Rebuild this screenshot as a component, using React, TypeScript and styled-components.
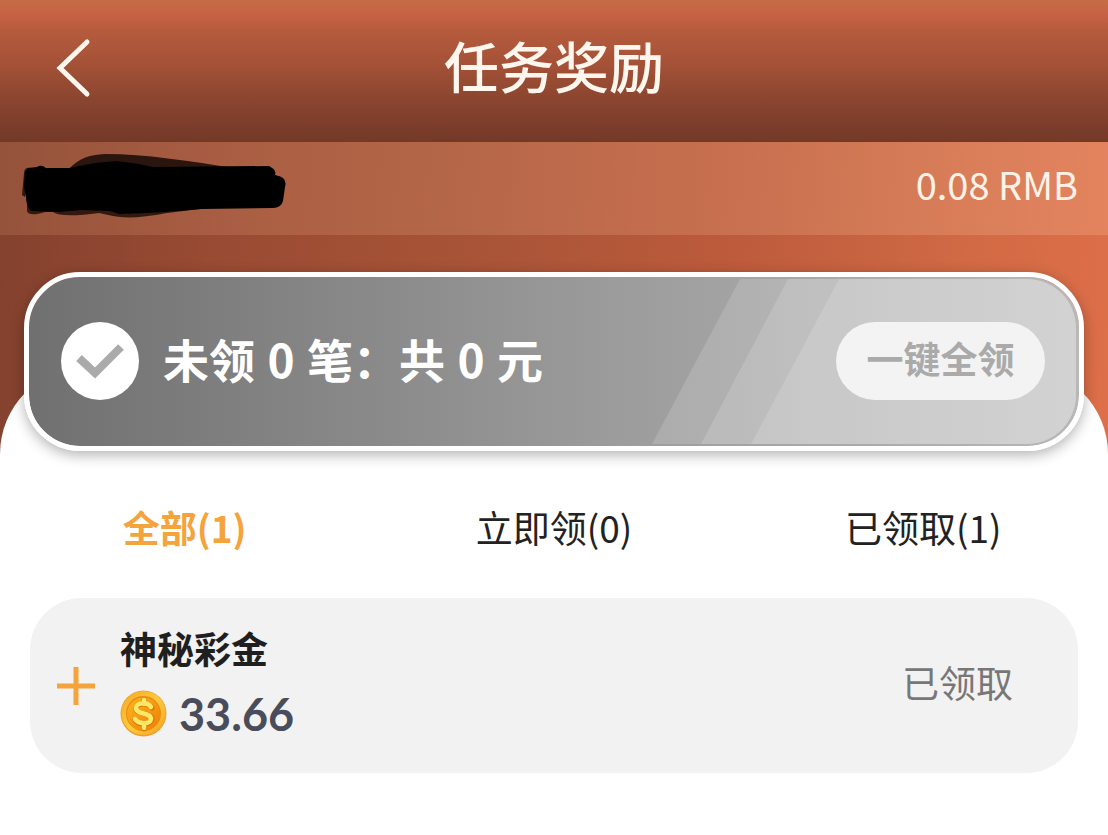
import React, { useState } from "react";
import styled, { createGlobalStyle } from "styled-components";

const GlobalStyle = createGlobalStyle`
  *, *::before, *::after { box-sizing: border-box; }
  body {
    margin: 0;
    background: #fff;
    color: #222;
    font-family: "Noto Sans CJK SC", "Noto Sans", sans-serif;
  }
  button { border: 0; padding: 0; background: none; font: inherit; color: inherit; cursor: pointer; }
  h1, h2, p, ul { margin: 0; padding: 0; font-weight: 400; }
`;

const Header = styled.header`
  display: grid;
  grid-template-columns: 148px 1fr 148px;
  align-items: center;
  height: 142px;
  padding-bottom: 6px;
  color: #fff6ee;
  background: linear-gradient(180deg, #c66c45 0, #c66145 16px, #b65b3d 30px, #a65238 62px, #8a452f 100px, #7f3f2d 120px, #733927 142px);
`;

const BackButton = styled.button`
  display: flex;
  align-items: center;
  justify-content: center;
  height: 100px;
`;

const PageTitle = styled.h1`
  padding-bottom: 8px;
  font-size: 55px;
  font-weight: 500;
  line-height: 80px;
  text-align: center;
`;

const Hero = styled.section`
  background: linear-gradient(95deg, #83412e 0%, #9a4b33 20%, #a75337 40%, #bd5b3c 64%, #d16a45 84%, #e0704a 100%);
`;

const AccountBar = styled.div`
  display: flex;
  align-items: center;
  justify-content: space-between;
  height: 93px;
  padding: 0 30px 6px 21px;
  background: linear-gradient(90deg, rgba(255, 190, 140, 0.14), rgba(255, 215, 180, 0.2));
`;

const Balance = styled.p`
  padding-bottom: 4px;
  color: #fff3e8;
  font-size: 38px;
  line-height: 48px;
`;

const SummaryWrap = styled.div`
  padding: 37px 24px 0;
`;

const SummaryCard = styled.div`
  position: relative;
  z-index: 1;
  display: flex;
  align-items: center;
  height: 179px;
  padding: 0 34px 2px 32px;
  border: 5px solid #fff;
  border-radius: 56px;
  background: linear-gradient(90deg, #707070, #9c9c9c 56%, #b8b8b8) padding-box;
  box-shadow: 0 4px 14px rgba(0, 0, 0, 0.3);
`;

const Shine = styled.div`
  position: absolute;
  inset: 2px 3px 2px 2px;
  overflow: hidden;
  border-radius: 49px;

  svg {
    position: absolute;
    top: 0;
    right: 0;
  }
`;

const CheckBadge = styled.span`
  position: relative;
  display: grid;
  place-items: center;
  width: 78px;
  height: 78px;
  border-radius: 50%;
  background: #fff;
`;

const SummaryText = styled.p`
  position: relative;
  flex: 1;
  padding: 0 0 6px 24px;
  color: #fff;
  font-size: 46px;
  font-weight: 700;
  line-height: 64px;
  white-space: nowrap;
`;

const Count = styled.span`
  padding: 0 2px;
`;

const ClaimAll = styled.button`
  position: relative;
  width: 209px;
  height: 78px;
  padding-bottom: 6px;
  border-radius: 39px;
  background: #f3f3f3;
  color: #aaa;
  font-size: 37px;
  font-weight: 700;
  line-height: 48px;
`;

const Sheet = styled.main`
  margin-top: -84px;
  padding: 134px 30px 40px;
  border-radius: 87px 87px 0 0;
  background: #fff;
`;

const Tabs = styled.nav`
  display: grid;
  grid-template-columns: repeat(3, 1fr);
  margin: 0 -30px;
`;

const Tab = styled.button<{ $active: boolean }>`
  color: ${(p) => (p.$active ? "#f5a33b" : "#222")};
  font-size: 37px;
  font-weight: ${(p) => (p.$active ? 700 : 400)};
  line-height: 52px;
`;

const RewardList = styled.ul`
  padding-top: 45px;
  list-style: none;
`;

const RewardItem = styled.li`
  display: flex;
  align-items: center;
  height: 175px;
  padding: 0 65px 0 26px;
  border-radius: 52px;
  background: #f2f2f2;
`;

const ExpandButton = styled.button`
  display: flex;
  margin-right: 24px;
`;

const RewardInfo = styled.div`
  flex: 1;
  padding-bottom: 8px;
`;

const RewardName = styled.h2`
  color: #1f1f1f;
  font-size: 37px;
  font-weight: 700;
  line-height: 52px;
`;

const Amount = styled.p`
  display: flex;
  align-items: center;
  gap: 12px;
  margin-top: 12px;
  color: #494c5a;
  font-family: Lato, "Noto Sans", sans-serif;
  font-size: 45px;
  font-weight: 700;
  line-height: 56px;
`;

const Status = styled.span`
  padding-bottom: 8px;
  color: #777;
  font-size: 37px;
  line-height: 52px;
`;

const ChevronIcon = () => (
  <svg width="36" height="60" viewBox="0 0 36 60" fill="none" stroke="currentColor" strokeWidth="5" strokeLinecap="round" aria-hidden="true">
    <path d="M31 4 4 30 31 56" />
  </svg>
);

const ScribbleMark = () => (
  <svg width="266" height="66" viewBox="0 0 266 66" aria-hidden="true">
    <path d="M48 16C58 5 68 2 84 1C126 1 166 8 214 15L240 20 100 28 46 22Z" fill="#2a160f" />
    <path d="M3 20Q3 14 10 15L4 44 1 42ZM6 40 6 58Q8 64 24 59L32 59Q40 65 78 60L92 63Q110 67 146 60L196 54 100 40Z" fill="#321910" />
    <path d="M7 15 16 14Q20 11 25 15L48 15 74 10 96 8 118 11 132 14 248 13Q256 17 254 22Q267 24 264 34L262 48Q260 55 252 55L180 56Q140 60 98 61Q90 58 88 58L60 57 38 59 10 58Q5 53 5 44L3 34 4 19Z" fill="#000" />
  </svg>
);

const CheckIcon = () => (
  <svg width="78" height="78" viewBox="0 0 78 78" fill="none" stroke="#aaa" strokeWidth="8" aria-hidden="true">
    <path d="M18 36 34 51 60 25" />
  </svg>
);

const StripesDrawing = () => (
  <svg width="424" height="165" viewBox="0 0 424 165" fill="#fff" fillOpacity="0.15" aria-hidden="true">
    <path d="M88 0H424V165H0Z" />
    <path d="M136 0H424V165H49Z" />
    <path d="M187 0H424V165H99Z" />
  </svg>
);

const PlusIcon = () => (
  <svg width="40" height="40" viewBox="0 0 40 40" fill="none" stroke="#f5a33b" strokeWidth="5" aria-hidden="true">
    <path d="M20 1V39M1 20H39" />
  </svg>
);

const CoinIcon = () => (
  <svg width="47" height="47" viewBox="0 0 47 47" aria-hidden="true">
    <defs>
      <linearGradient id="coinRim" x1="0" y1="0" x2="1" y2="1">
        <stop offset="0" stopColor="#f5a623" />
        <stop offset="0.5" stopColor="#fccb3c" />
        <stop offset="1" stopColor="#f5a21f" />
      </linearGradient>
      <linearGradient id="coinFace" x1="0" y1="0" x2="1" y2="1">
        <stop offset="0" stopColor="#ffb41f" />
        <stop offset="0.5" stopColor="#f59a12" />
        <stop offset="1" stopColor="#e9800a" />
      </linearGradient>
    </defs>
    <circle cx="23.500" cy="23.500" r="23" fill="#eda02f" />
    <circle cx="23.500" cy="23" r="22" fill="url(#coinRim)" />
    <circle cx="23.500" cy="23.500" r="17.500" fill="#ea8a10" />
    <circle cx="23.500" cy="24" r="16.500" fill="url(#coinFace)" />
    <g fill="none" strokeLinecap="round" strokeLinejoin="round">
      <path d="M32 18C29 13 17 12 16 19C16 25 32 22 32 29C31 36 18 35 15 30M24 10V14M24 35V39" stroke="#dc7606" strokeWidth="5" />
      <path d="M31 17C28 12 16 12 16 18C16 25 31 22 31 29C30 35 18 34 15 29M24 10V14M24 34V38" stroke="#ffe768" strokeWidth="4.500" />
    </g>
  </svg>
);

const tabs = [
  { id: "all", label: "全部(1)" },
  { id: "ready", label: "立即领(0)" },
  { id: "claimed", label: "已领取(1)" },
];

export default function App() {
  const [active, setActive] = useState("all");

  return (
    <>
      <GlobalStyle />
      <Header>
        <BackButton aria-label="返回">
          <ChevronIcon />
        </BackButton>
        <PageTitle>任务奖励</PageTitle>
      </Header>
      <Hero>
        <AccountBar>
          <ScribbleMark />
          <Balance>0.08 RMB</Balance>
        </AccountBar>
        <SummaryWrap>
          <SummaryCard>
            <Shine>
              <StripesDrawing />
            </Shine>
            <CheckBadge>
              <CheckIcon />
            </CheckBadge>
            <SummaryText>
              未领 <Count>0</Count> 笔：共 <Count>0</Count> 元
            </SummaryText>
            <ClaimAll>一键全领</ClaimAll>
          </SummaryCard>
        </SummaryWrap>
        <Sheet>
          <Tabs>
            {tabs.map((tab) => (
              <Tab key={tab.id} $active={tab.id === active} onClick={() => setActive(tab.id)}>
                {tab.label}
              </Tab>
            ))}
          </Tabs>
          <RewardList>
            <RewardItem>
              <ExpandButton aria-label="展开">
                <PlusIcon />
              </ExpandButton>
              <RewardInfo>
                <RewardName>神秘彩金</RewardName>
                <Amount>
                  <CoinIcon />
                  33.66
                </Amount>
              </RewardInfo>
              <Status>已领取</Status>
            </RewardItem>
          </RewardList>
        </Sheet>
      </Hero>
    </>
  );
}
